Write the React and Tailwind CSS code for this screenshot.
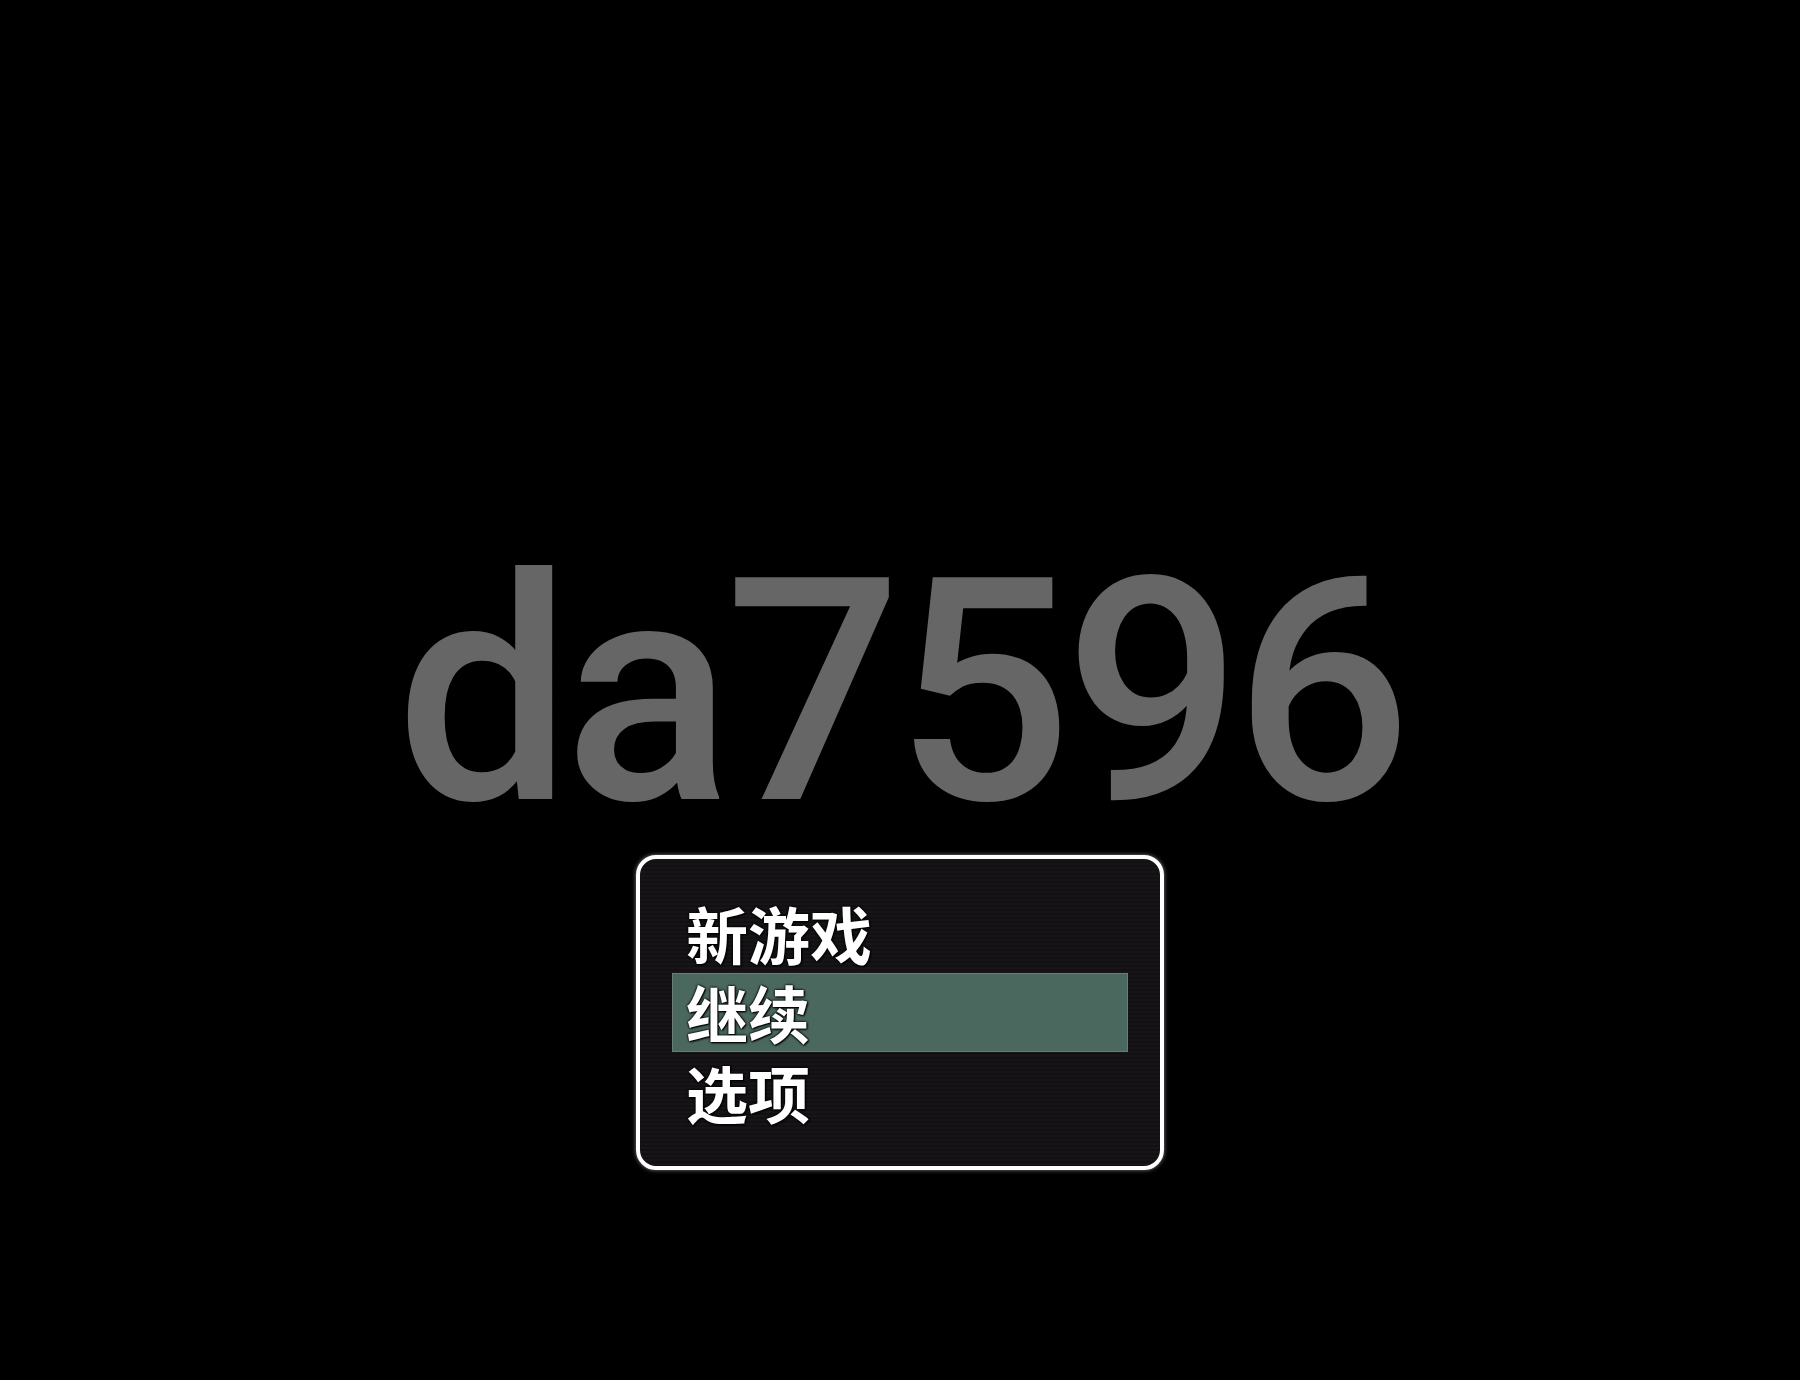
const items = ['新游戏', '继续', '选项'];

export default function App() {
  const selected = 1;

  return (
    <div className="h-[1380px] w-full bg-black flex flex-col items-center pt-[537px]">
      <h1 className="text-[312px] leading-none tracking-[-0.024em] text-[#666666] font-['Roboto','Liberation_Sans',sans-serif] font-medium">
        da7596
      </h1>

      <div className="mt-[6px] w-[528px] h-[315px] rounded-[20px] border-4 border-white shadow-[0_0_4px_rgba(255,255,255,0.5)] bg-[repeating-linear-gradient(to_bottom,#171518_0px,#171518_2px,#121013_2px,#121013_4px)] px-8 py-[34px] flex flex-col">
        {items.map((label, i) => (
          <div
            key={label}
            className={`h-20 flex items-center pl-[13px] ${
              i === selected ? 'bg-[#4b685f] border border-[#687d76]' : 'border border-transparent'
            }`}
          >
            <span className="text-[62px] leading-[1.2] font-bold text-white font-['Noto_Sans_CJK_SC','Noto_Sans',sans-serif] [text-shadow:0_0_3px_#000,0_0_2px_#000,1px_1px_2px_#000]">
              {label}
            </span>
          </div>
        ))}
      </div>
    </div>
  );
}
